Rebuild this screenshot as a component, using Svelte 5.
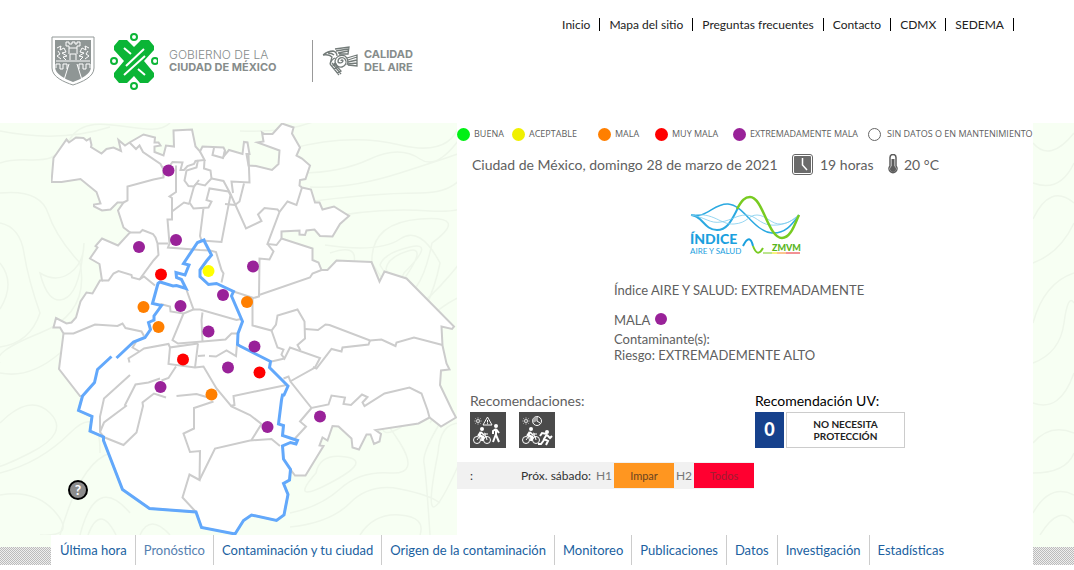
<script lang="ts">
	const topLinks = ["Inicio", "Mapa del sitio", "Preguntas frecuentes", "Contacto", "CDMX", "SEDEMA"];

	const sections = [
		"Última hora",
		"Pronóstico",
		"Contaminación y tu ciudad",
		"Origen de la contaminación",
		"Monitoreo",
		"Publicaciones",
		"Datos",
		"Investigación",
		"Estadísticas",
	];

	const legend = [
		{ label: "BUENA", level: "buena" },
		{ label: "ACEPTABLE", level: "aceptable" },
		{ label: "MALA", level: "mala" },
		{ label: "MUY MALA", level: "muy-mala" },
		{ label: "EXTREMADAMENTE MALA", level: "extrema" },
		{ label: "SIN DATOS O EN MANTENIMIENTO", level: "sin-datos" },
	];

	const levelColor: Record<string, string> = {
		aceptable: "#ffff00",
		mala: "#ff7f00",
		"muy-mala": "#ff0000",
		extrema: "#992299",
	};

	const stations = [
		{ x: 168.5, y: 170.5, level: "extrema" },
		{ x: 176, y: 240, level: "extrema" },
		{ x: 139, y: 247, level: "extrema" },
		{ x: 253, y: 266.5, level: "extrema" },
		{ x: 223, y: 295, level: "extrema" },
		{ x: 180.5, y: 306, level: "extrema" },
		{ x: 208.5, y: 331.5, level: "extrema" },
		{ x: 254.5, y: 346.5, level: "extrema" },
		{ x: 228, y: 367.5, level: "extrema" },
		{ x: 160.5, y: 387, level: "extrema" },
		{ x: 320, y: 416.5, level: "extrema" },
		{ x: 267.5, y: 427, level: "extrema" },
		{ x: 161, y: 274.5, level: "muy-mala" },
		{ x: 183, y: 359.5, level: "muy-mala" },
		{ x: 259.5, y: 372.5, level: "muy-mala" },
		{ x: 143.5, y: 307, level: "mala" },
		{ x: 158.5, y: 327, level: "mala" },
		{ x: 247, y: 302, level: "mala" },
		{ x: 211.5, y: 394.5, level: "mala" },
		{ x: 208.5, y: 271, level: "aceptable" },
	];

	// metropolitan area, clockwise from the west end
	const metroArea =
		"M51.5 182L53.5 158 66.5 139.5 69 142.5 76 137.5 83.5 138 86.5 140.5 90 138.5 91.5 145 91 147 101.5 153.5 106.5 149 113.5 147.5 121 151 118.5 140 125 145.5 129.5 142.5 143.5 134.5 155 137.5 154.5 142.5 158.5 142.5 160.5 145.5 154.5 146.5 154.5 152 163.5 155.5 166 145.5 174 146.5 173.5 130.5 192 129.5 195.5 146.5 200 151.5 202.5 146.5 223.5 147.5 225 150.5 224 156 229 150 242.5 154 244 142 247.5 142.5 249.5 154 246.5 154 248.5 165.5 256 166 272 170 278.5 164 279.5 150.5 257.5 142.5 263.5 141.5 262 132.5 264.5 134 272.5 134 282 123.5 293.5 127.5 292 133.5 300 147.5 296.5 155.5 302 158.5 310 165.5 305.5 179 300 180 299.5 185.5 302 187.5 311 189.5 315 202.5 319.5 202.5 322.5 209.5 334 206.5 349 216 340 224 332.5 236.5 320 236 314.5 229.5 306.5 230.5 305 235 299.5 234.5 299.5 230.5 281.5 231.5 281.5 238.5 312.5 248.5 312.5 260 318.5 262.5 321.5 270 327.5 270 336.5 260.5 371.5 262 379.5 281.5 384.5 271.5 406.5 278.5 454 326.5 452 329 441.5 326.5 442.5 345.5 446.5 363.5 449.5 369.5 441 370.5 440 385 452 410 456 417.5 441 426.5 429.5 417.5 418.5 423.5 375.5 430 381 434 379.5 441.5 374 444 370.5 434.5 366.5 434.5 359 449.5 352.5 447.5 351.5 438.5 338.5 426.5 332.5 426 327.5 440.5 322.5 437.5 319.5 445.5 323.5 446 305.5 475.5 295 475.5 290.5 469.5 289.5 480 283.5 483.5 288 494.5 284 515 276.5 520.5 251.5 515 243.5 520.5 235 534 201.5 527.5 196 512 149.5 508.5 122.5 489.5 103.5 440.5 103.5 437 90 431 92 416.5 78.5 410.5 82.5 396 80 396 59 369 63.5 333.5 60 327.5 53.5 327.5 56 318 66.5 323.5 71.5 322.5 76 317.5 80.5 301.5 86.5 292.5 92.5 293.5 100 280.5 102 280.5 99.5 264 90 258.5 97.5 247.5 95.5 246 102 238.5 118 245.5 130 232.5 123.5 227.5 118 210.5 123.5 202.5 117.5 202.5 110.5 209.5 102 210.5 94 206.5 94 204.5 100.5 203.5 96.5 192 80.5 179 61.5 182Z";

	// limits between municipalities
	const limits = [
		"M129.5 142.5L136 149 139.5 145.5 143 152 160.5 164 163.5 169.5 163.5 177.5 153.5 179.5 127.5 186.5 127.5 200.5 123.5 202.5",
		"M176 165.5L176 192 169.5 196.5 172 198 172 219.5 167.5 219.5 169.5 243.5 168 247.5 200 250 210 250.5 216 252 221.5 270 223.5 273.5 221.5 282.5",
		"M166 171L172.5 162 182.5 162.5 180.5 170 184 170 187.5 166 194 164 195.5 161 204.5 160 200 151.5",
		"M198 160L196.5 167.5 186.5 170.5 184.5 180.5 188.5 186 194 186.5 196.5 183.5 205 185.5 211.5 178.5 210.5 170.5 204 168.5 204.5 160",
		"M194 186.5L189.5 202.5 193.5 208.5 208.5 207.5 211.5 201.5 206.5 200 209.5 188.5 228.5 191.5 230.5 195 221.5 242 201.5 240.5 200 236 203.5 208",
		"M194 186.5L199 180M172 211.5L184 202.5 189.5 204",
		"M214 148L212.5 155 223 158 225 150.5",
		"M211.5 178.5L223.5 181 230.5 194 246 228.5 261.5 221 258 214.5 264.5 208 277.5 209.5 279.5 212",
		"M233 193L231.5 181.5 249.5 182.5 248.5 155M244 183.5L239.5 201.5 235 205 225 204",
		"M302 187.5L296.5 205 287.5 201.5 279.5 212 267.5 244 276.5 245 281.5 238.5",
		"M267.5 244L273.5 251.5 269.5 259.5 259.5 258.5 259 296.5",
		"M233.5 291.5L253.5 298 259 296.5 259 295 310 277.5 312.5 273.5 321.5 270",
		"M252.5 298L252.5 325.5 271.5 330.5 276 324.5 277.5 315.5 297.5 309.5 304.5 321.5 305 338.5 297.5 345 300.5 350.5",
		"M271.5 330.5L277.5 347.5 283.5 349.5 281.5 354.5 284.5 358.5 290 347.5 320 358 315 367.5 290 381.5M284.5 358.5L271.5 361.5",
		"M305 329L318 330 325.5 324.5 329.5 325 370 340.5 381.5 339.5 395.5 346 396.5 342.5 414 337.5 442.5 345",
		"M370 340.5L368.5 344.5 342.5 347.5 341.5 351.5 331.5 349 316.5 368.5 313 367",
		"M283.5 378.5L288.5 376.5 290.5 381.5 311.5 408 328.5 404.5 331.5 395.5 345 397.5 343.5 404 351 405 362 394.5 367.5 397 362.5 402.5 364.5 406 384.5 393.5 409.5 387.5 421.5 393.5 427.5 410 429.5 417.5",
		"M311.5 408L300 421.5 306 426.5 295 438.5",
		"M286.5 385L233.5 396 234.5 405 230.5 406",
		"M198 343.5L170 347.5 168.5 364 195 367.5 203.5 366.5 216.5 388.5 231.5 406.5 250 415 261.5 424 251.5 440",
		"M195 367.5L198 343.5M170 347.5L168.5 344 144 348.5 139.5 351.5 128.5 358.5 129.5 362.5M139.5 351.5L132.5 347.5 136 342",
		"M63.5 333.5L73.5 333.5 95 324.5 117.5 326 122.5 323.5 125.5 328 141.5 331.5 144 336",
		"M186 288.5L193.5 309.5 183.5 313.5 172.5 340 178 343.5 202.5 341.5 225.5 339.5 231.5 333.5 238 333.5",
		"M160.5 304L170 306.5 170.5 311.5 183.5 313.5M193.5 309.5L200 309.5 236.5 320 241 319M202.5 312.5L201.5 320 202.5 341.5",
		"M198 356L205 355.5M209 356L216 356.5 226.5 350.5 236 356 237 344",
		"M130 375L104 398.5 101.5 410 100 416.5 100 432 104 437",
		"M176 366.5L168.5 378 161.5 380.5M160 378.5L148.5 382.5 135.5 384.5 125 405 126 406 104 422.5 100 432",
		"M166 397.5L154 393.5 142.5 402.5 143 406 136.5 432.5 123.5 445 103.5 437",
		"M176.5 396L196.5 394 211.5 398.5",
		"M213.5 401.5L194 408 194 428.5 183.5 433.5 190 452 200 451 199.5 480 189.5 474.5 182.5 497.5 195.5 511.5",
		"M199.5 480L215 448.5 250 440.5 271.5 439 280 446",
		"M102 280.5L108.5 280.5 113.5 273.5 118.5 271 131.5 275 132 277.5 139.5 279.5 144 276.5 155 285.5",
		"M139.5 279.5L153.5 260.5 158.5 255 157.5 243.5 155.5 237.5 153 234 142.5 230 140 232.5 130 232.5M157.5 243.5L168 243.5",
	];

	// boundary of Mexico City, open on the south-west side
	const cityLimit =
		"M116.5 358L133.5 342 145 337.5 150.5 329.5 148.5 322.5 154 320 154 316 161.5 305.5 152.5 303.5 158 283.5 160 282 173 286 176.5 285.5 186 288.5 181.5 279.5 176.5 277.5 176 272.5 185 275 189 265 183.5 263.5 197.5 242.5 204 240 205 242.5 211.5 255 206.5 261 200 270 200 276.5 208.5 284.5 216.5 283.5 233.5 291.5 231.5 296 242.5 321.5 238 333.5 237.5 344.5 240 346 270.5 361.5 269.5 367.5 288 386 284 395 282.5 395 281.5 400 278.5 424 283.5 425.5 282.5 435.5 297.5 440.5 296 444 290.5 442.5 282.5 446 283.5 459 290.5 469.5 289.5 480 283.5 483.5 288 494.5 284 515 276.5 520.5 251.5 515 243.5 520.5 235 534 201.5 527.5 196 512 149.5 508.5 122.5 489.5 103.5 440.5 103.5 437 90 431 92 416.5 78.5 410.5 82.5 396 94.5 382.5 97.5 369.5 111.5 356.5";

	const contours = [
		"M0 8Q60 20 110 4M0 40C30 30 50 50 70 16S150 20 170 0M0 70Q40 66 48 90T80 140Q90 190 40 210T0 240",
		"M0 100Q20 104 24 130T40 190Q30 220 0 224M0 140Q16 160 0 186M40 150Q56 160 70 150T84 120Q80 170 64 176T40 150Z",
		"M0 300Q30 270 50 290T30 330 0 340M0 350Q40 340 70 310T100 330M0 372Q36 366 56 390T40 412M0 250Q30 256 60 230T90 200",
		"M88 412Q100 380 116 412M80 412Q96 350 130 390M60 412Q80 340 110 330M140 412Q150 390 170 412",
		"M240 8Q290 10 320 -4M290 26Q350 10 400 22T460 0M300 50Q340 50 370 36T420 36 470 0M310 64Q350 66 400 50T460 30 500 0",
		"M300 80Q370 70 420 70T470 26M312 98Q370 84 430 88T480 50M325 122Q380 130 400 116T440 140Q430 190 400 220",
		"M372 140Q370 100 420 96T432 120Q420 180 394 174ZM380 142Q384 130 410 124T404 150Q396 170 380 142ZM386 146Q388 134 408 128T404 156Q396 168 386 146Z",
		"M300 148Q350 160 354 140T330 130M310 160Q330 180 372 178M420 206Q440 180 470 170M390 200Q420 190 460 140",
		"M316 350Q320 330 346 334T330 360 316 350ZM290 390Q320 384 340 366T390 350 400 320 382 304 420 290 430 300",
		"M290 404Q330 400 350 380T400 366 440 380M360 412Q374 390 400 392T420 412M430 412Q426 350 424 340T440 300M438 330Q440 300 460 300T450 360 438 330Z",
		"M1033 20Q1050 40 1074 10M1033 60Q1060 70 1074 40M1033 96Q1050 60 1074 80M1033 140Q1060 130 1074 100M1033 200Q1044 160 1074 150M1033 240Q1060 230 1064 200T1074 180",
		"M1033 280Q1060 290 1074 250M1033 320Q1050 300 1074 310M1033 350Q1066 350 1074 330M1033 390Q1050 360 1074 372M1040 412Q1060 380 1074 400",
	];
</script>

<header class="header">
	<div class="brand">
		<svg class="brand__arms" viewBox="0 0 44 50" aria-hidden="true">
			<path d="M1 1H43V32C43 41 31 46 22 49 13 46 1 41 1 32Z" fill="#fff" stroke="#939998" stroke-width="1" />
			<path d="M4 4H40V31C40 38 30 43 22 46 14 43 4 38 4 31Z" fill="#8f9695" />
			<path d="M15 6V10H18V18M29 6V10H26V18M15 6H18V8H21V6H24V8H26V6H29M18 12H26M19 24V18H25V24M5 25H39M18 28L13 44M26 28L31 44M5 32V28H9V33H12V28H16V33M39 32V28H35V33H32V28H28V33" fill="none" stroke="#fff" stroke-width="1" />
			<path d="M6 12L10 10 9 14 13 12 15 16 11 17 16 20 12 21 15 24M38 12L34 10 35 14 31 12 29 16 33 17 28 20 32 21 29 24M7 15L9 18 6 20 10 23M37 15L35 18 38 20 34 23" fill="none" stroke="#fff" stroke-width="1" />
		</svg>
		<svg class="brand__cdmx" viewBox="0 0 48 58" aria-hidden="true">
			<g fill="none" stroke="#0bb536" stroke-width="2">
				<circle cx="24" cy="5" r="3" />
				<circle cx="4" cy="29" r="3" />
				<circle cx="45" cy="29" r="3" />
				<circle cx="24" cy="54" r="3" />
			</g>
			<path fill="#0bb536" d="M9 8H17L24 15 31 8H39L44 14V18L34 29 44 41V45L38 51H30L24 44 17 51H9L4 45V41L14 29 4 18V14Z" />
			<path d="M34 17L16 34M35 24L14 43M14 16L21 22M28 37L35 43" fill="none" stroke="#fff" stroke-width="2" />
		</svg>
		<p class="brand__gov">GOBIERNO DE LA<strong>CIUDAD DE MÉXICO</strong></p>
		<svg class="brand__bird" viewBox="0 0 36 30" aria-hidden="true">
			<g fill="none" stroke="#737b79" stroke-width="1.300">
				<path d="M1 9Q6 5 11 5 15 6 15 10M1 9Q7 8 10 11L8 18Q10 13 13 12M6 7Q10 7 12 9" />
				<path d="M13 3L27 1 26 8 17 8M14 5L26 3M16 7L26 5" />
				<path d="M25 12L35 9V20L26 19M26 14L35 11M26 16L35 14M26 18L35 17" />
				<path d="M10 17L19 28M8 18L17 29M12 17L19 25 15 27M10 20L15 18M12 23L16 20" />
				<path d="M19 15a1 1 0 0 1 2 0 3 3 0 0 1-5 1 4 4 0 0 1 7-3 5 5 0 0 1-3 8 6 6 0 0 1-7-6 7 7 0 0 1 10-5 7 7 0 0 1 2 9" />
			</g>
		</svg>
		<p class="brand__air">CALIDAD<br />DEL AIRE</p>
	</div>
	<nav class="top-links" aria-label="Enlaces">
		{#each topLinks as link}
			<a href="#{link}">{link}</a>
		{/each}
	</nav>
</header>

<main class="stage">
	<svg class="stage__contours" viewBox="0 0 1074 412" preserveAspectRatio="xMidYMin slice" aria-hidden="true">
		{#each contours as d}
			<path {d} />
		{/each}
	</svg>

	<div class="map">
		<svg viewBox="51 123 406 412" role="img" aria-label="Mapa de estaciones">
			<path class="map__area" d={metroArea} />
			{#each limits as d}
				<path class="map__limit" {d} />
			{/each}
			<path class="map__city" d={cityLimit} />
			{#each stations as station}
				<circle cx={station.x} cy={station.y} r="6" fill={levelColor[station.level]} />
			{/each}
		</svg>
		<button class="map__help" type="button" aria-label="Ayuda">?</button>
	</div>

	<section class="panel">
		<ul class="legend">
			{#each legend as item}
				<li><span class="dot dot--{item.level}"></span>{item.label}</li>
			{/each}
		</ul>

		<div class="now">
			<span class="now__date">Ciudad de México, domingo 28 de marzo de 2021</span>
			<svg class="now__clock" viewBox="0 0 21 21" aria-hidden="true">
				<rect x="0.5" y="0.5" width="20" height="20" rx="2.5" fill="#fff" stroke="#666" />
				<rect x="2" y="2" width="17" height="17" rx="1" fill="#6b6b6b" />
				<path d="M10.500 4V11L15 16" fill="none" stroke="#fff" stroke-width="1.500" />
			</svg>
			<span class="now__hour">19 horas</span>
			<svg class="now__thermo" viewBox="0 0 10 20" aria-hidden="true">
				<path d="M2 3.500a3 3 0 0 1 6 0V12a4 4 0 1 1-6 0Z" fill="#fff" stroke="#5c5c5c" stroke-width="1.500" />
				<path d="M5 5V15" stroke="#5c5c5c" stroke-width="3" />
				<circle cx="5" cy="15" r="3" fill="#5c5c5c" />
			</svg>
			<span>20 °C</span>
		</div>

		<svg class="index-logo" viewBox="-1 0 112 60" role="img" aria-label="Índice Aire y Salud ZMVM">
			<g fill="none" stroke="#2ba9e1">
				<path d="M1 20C12 20 14 35 27 35 38 35 42 24 48 13" stroke-width="2" />
				<path d="M1 20C16 24 24 8 38 9 54 10 63 36 82 38 96 39 103 28 109 20" stroke-width="1.500" />
				<path d="M1 20C25 17 30 30 44 29S58 20 67 20 82 30 91 29 103 24 109 20" stroke="#7ccbee" stroke-width="0.800" />
				<path d="M1 20C15 22 20 29 31 27S47 20 56 20 70 29 80 30 101 28 109 20" stroke="#7ccbee" stroke-width="0.800" />
			</g>
			<path d="M47 14C52 5 55 2 60 2 73 2 78 43 92 43 101 43 105 28 109 20" fill="none" stroke="#78cb21" stroke-width="2.500" />
			<text class="index-logo__name" x="0" y="49">ÍNDICE</text>
			<text class="index-logo__sub" x="0" y="59">AIRE Y SALUD</text>
			<path d="M53 51C58 41 61 43 63 51" fill="none" stroke="#1ba0de" stroke-width="2" />
			<path d="M63 51C66 59 69 60 73 53" fill="none" stroke="#78cb21" stroke-width="2" />
			<text class="index-logo__zone" x="82" y="56">ZMVM</text>
			<path d="M73 58H82" stroke="#78cb21" />
			<path d="M82 58H87" stroke="#f5e600" />
			<path d="M87 58H96" stroke="#f68b1f" />
			<path d="M96 58H110" stroke="#e5232b" />
		</svg>

		<div class="index">
			<p class="index__level">Índice AIRE Y SALUD: EXTREMADAMENTE MALA <span class="dot dot--extrema"></span></p>
			<p>Contaminante(s):</p>
			<p>Riesgo: EXTREMADEMENTE ALTO</p>
		</div>

		<div class="advice">
			<div class="advice__block">
				<h2>Recomendaciones:</h2>
				<div class="advice__icons">
					<svg viewBox="0 0 36 36" role="img" aria-label="Evita actividades al aire libre">
						<rect width="36" height="36" fill="#4a4a4a" />
						<g fill="none" stroke="#fff">
							<circle cx="8" cy="9" r="1.500" stroke-width="0.800" />
							<path d="M8 5.500V6.500M8 11.500V12.500M4.500 9H5.500M10.500 9H11.500M5.500 6.500L6.300 7.300M10.500 6.500L9.700 7.300M5.500 11.500L6.300 10.700M10.500 11.500L9.700 10.700" stroke-width="0.800" />
							<path d="M17.500 5L22 13H13Z M17.500 8V10.500M17.500 11.200V12.200" />
							<circle cx="7" cy="28" r="3.500" />
							<circle cx="17" cy="28" r="3.500" />
							<path d="M7 28L10 24 13 28 16 24 17 28M14 21L16 22H18" />
							<path d="M11 20L9 23 13 25 12 29" stroke-width="2.500" />
							<path d="M11 20L14 23H16" stroke-width="1.500" />
							<path d="M26 17V23L29 30M26 22L23 30M26 17L23 19V22M26 17L29 21" stroke-width="2" />
						</g>
						<circle cx="12" cy="17" r="2" fill="#fff" />
						<circle cx="26" cy="14" r="2" fill="#fff" />
					</svg>
					<svg viewBox="0 0 36 36" role="img" aria-label="Limita el ejercicio por horario">
						<rect width="36" height="36" fill="#4a4a4a" />
						<g fill="none" stroke="#fff">
							<circle cx="7" cy="9" r="1.500" stroke-width="0.800" />
							<path d="M7 5.500V6.500M7 11.500V12.500M3.500 9H4.500M9.500 9H10.500M4.500 6.500L5.300 7.300M9.500 6.500L8.700 7.300M4.500 11.500L5.300 10.700M9.500 11.500L8.700 10.700" stroke-width="0.800" />
							<circle cx="18" cy="9" r="4.500" />
							<path d="M18 5V9L21 11" />
							<circle cx="7" cy="28" r="3.500" />
							<circle cx="17" cy="28" r="3.500" />
							<path d="M7 28L10 24 13 28 16 24 17 28M14 21L16 22H18" />
							<path d="M11 20L9 23 13 25 12 29" stroke-width="2.500" />
							<path d="M11 20L14 23H16" stroke-width="1.500" />
							<path d="M28 22L25 27 29 29 27 33M25 28L22 32H19M28 22L23 21 21 24M28 23L31 26 33 24" stroke-width="2" />
						</g>
						<path d="M18 9V4.500A4.500 4.500 0 0 0 14 11Z" fill="#aaa" />
						<circle cx="12" cy="17" r="2" fill="#fff" />
						<circle cx="28" cy="20" r="2" fill="#fff" />
					</svg>
				</div>
			</div>
			<div class="advice__block advice__block--uv">
				<h2>Recomendación UV:</h2>
				<div class="uv">
					<strong class="uv__value">0</strong>
					<span class="uv__text">NO NECESITA PROTECCIÓN</span>
				</div>
			</div>
		</div>

		<div class="driving">
			<span class="driving__today">:</span>
			<span class="driving__next">Próx. sábado:</span>
			<span class="driving__tag">H1</span>
			<span class="driving__cell driving__cell--h1">Impar</span>
			<span class="driving__tag">H2</span>
			<span class="driving__cell driving__cell--h2">Todos</span>
		</div>
	</section>
</main>

<div class="nav-band">
	<nav class="sections" aria-label="Secciones">
		{#each sections as section, i}
			<a href="#{section}" class:is-active={i === 1}>{section}</a>
		{/each}
	</nav>
</div>

<style>
	:global(body) {
		margin: 0;
		background: #fff;
		color: #606060;
		font-family: Lato, "Open Sans", sans-serif;
		font-size: 14px;
	}

	p,
	h2,
	ul {
		margin: 0;
		padding: 0;
		list-style: none;
	}

	a {
		text-decoration: none;
		white-space: nowrap;
	}

	.header {
		display: flex;
		justify-content: space-between;
		align-items: flex-start;
		min-height: 123px;
		padding: 0 60px 0 51px;
		box-sizing: border-box;
	}

	.brand {
		display: flex;
		align-items: center;
		padding-top: 32px;
		color: #868c8b;
		font-family: Inter, sans-serif;
		white-space: nowrap;
	}

	.brand__arms {
		width: 44px;
		height: 50px;
		margin-right: 15px;
	}

	.brand__cdmx {
		width: 48px;
		height: 58px;
		margin-right: 11px;
	}

	.brand__gov {
		width: 112px;
		padding: 8px 31px 8px 0;
		margin-right: 9px;
		border-right: 1px solid #999;
		font-size: 12px;
		font-weight: 300;
		line-height: 13px;
	}

	.brand__gov strong {
		display: block;
		font-size: 11px;
		font-weight: 700;
	}

	.brand__bird {
		width: 36px;
		height: 30px;
		margin-right: 6px;
	}

	.brand__air {
		font-size: 11px;
		font-weight: 700;
		line-height: 13px;
	}

	.top-links {
		display: flex;
		gap: 9px;
		padding-top: 18px;
	}

	.top-links a {
		padding: 1px 9px 0 0;
		border-right: 1px solid #000;
		color: #222;
		font-size: 12px;
		line-height: 12px;
	}

	.stage {
		position: relative;
		display: flex;
		padding: 0 41px 0 51px;
		background: #f7fff3;
		overflow: hidden;
	}

	.stage__contours {
		position: absolute;
		inset: 0;
		width: 100%;
		height: 100%;
		fill: none;
		stroke: #eef6ea;
		stroke-width: 1.5;
	}

	.map {
		position: relative;
		flex: 0 1 406px;
	}

	.map svg {
		display: block;
		width: 100%;
	}

	.map__area {
		fill: #fff;
		stroke: #ccc;
		stroke-width: 2;
	}

	.map__limit {
		fill: none;
		stroke: #ccc;
		stroke-width: 2;
	}

	.map__city {
		fill: none;
		stroke: #62a8fb;
		stroke-width: 3;
	}

	.map__help {
		position: absolute;
		left: 17px;
		bottom: 35px;
		width: 20px;
		height: 20px;
		padding: 0;
		border: 2px solid #000;
		border-radius: 50%;
		background: #8c8c8c;
		color: #fff;
		font: 700 14px/16px Lato, sans-serif;
	}

	.panel {
		position: relative;
		flex: 1;
		min-width: 0;
		background: #fff;
	}

	.legend {
		display: grid;
		grid-template-columns: 55px 86px 57px 78px 135px auto;
		padding-top: 4px;
		font-family: "Open Sans", sans-serif;
		font-size: 9px;
		line-height: 14px;
		white-space: nowrap;
	}

	.legend li {
		display: flex;
		align-items: center;
		gap: 4px;
	}

	.dot {
		display: inline-block;
		flex: none;
		width: 13px;
		height: 13px;
		border-radius: 50%;
		box-sizing: border-box;
	}

	.dot--buena { background: #00f015; }
	.dot--aceptable { background: #f0f000; }
	.dot--mala { background: #ff7f00; }
	.dot--muy-mala { background: #ff0000; }
	.dot--extrema { background: #992299; }
	.dot--sin-datos { border: 1px solid #666; margin-right: 2px; }

	.now {
		display: flex;
		align-items: center;
		height: 22px;
		margin: 12px 0 20px;
		padding-left: 15px;
		font-size: 14px;
		white-space: nowrap;
	}

	.now__date {
		width: 320px;
	}

	.now__clock {
		width: 21px;
		height: 21px;
		margin-right: 7px;
	}

	.now__hour {
		width: 68px;
	}

	.now__thermo {
		width: 10px;
		height: 20px;
		margin-right: 6px;
	}

	.index-logo {
		display: block;
		width: 112px;
		height: 60px;
		margin: 0 auto;
	}

	.index-logo__name {
		fill: #1ba0de;
		font: 900 14px Lato, sans-serif;
	}

	.index-logo__sub {
		fill: #1ba0de;
		font: 8px Lato, sans-serif;
	}

	.index-logo__zone {
		fill: #58b51c;
		font: 900 9px Lato, sans-serif;
	}

	.index {
		width: 270px;
		margin: 20px 0 0 157px;
		font-size: 13px;
		line-height: 16px;
	}

	.index__level {
		margin-bottom: -4px;
		line-height: 30px;
	}

	.index .dot {
		width: 12px;
		height: 12px;
		margin-left: 2px;
	}

	.advice {
		display: flex;
		margin-top: 29px;
		padding-left: 13px;
	}

	.advice__block {
		flex: 0 0 285px;
	}

	.advice__block--uv {
		flex: 1;
	}

	.advice h2 {
		font-size: 14px;
		font-weight: 400;
		line-height: 18px;
		padding-bottom: 2px;
	}

	.advice__block--uv h2 {
		color: #000;
	}

	.advice__icons {
		display: flex;
		gap: 13px;
	}

	.advice__icons svg {
		width: 36px;
		height: 36px;
	}

	.uv {
		display: flex;
		gap: 2px;
		height: 36px;
	}

	.uv__value {
		width: 29px;
		background: #16418c;
		color: #fff;
		font-size: 18px;
		font-weight: 900;
		line-height: 34px;
		text-align: center;
	}

	.uv__text {
		width: 119px;
		padding: 5px 20px;
		border: 1px solid #ccc;
		box-sizing: border-box;
		color: #222;
		font-size: 10px;
		font-weight: 700;
		line-height: 12px;
		text-align: center;
	}

	.driving {
		display: flex;
		align-items: center;
		width: 297px;
		height: 27px;
		margin-top: 14px;
		background: #f1f1f1;
		color: #333;
		font-size: 12px;
		white-space: nowrap;
	}

	.driving__today {
		width: 51px;
		padding-left: 13px;
	}

	.driving__next {
		width: 73px;
	}

	.driving__tag {
		flex: 1;
		color: #777;
		text-align: center;
	}

	.driving__cell {
		width: 60px;
		font-size: 11px;
		line-height: 25px;
		text-align: center;
	}

	.driving__cell--h1 {
		background: #ff9620;
		color: #6b4420;
	}

	.driving__cell--h2 {
		background: #ff0030;
		color: #a01c30;
	}

	.nav-band {
		padding: 0 41px 0 51px;
		background:
			linear-gradient(#f7fff3, #f7fff3) 0 0 / 100% 12px no-repeat,
			repeating-conic-gradient(#bbb 0 25%, #eee 0 50%) 0 0 / 2px 2px;
	}

	.sections {
		display: flex;
		padding-left: 1px;
		background: #fff;
	}

	.sections a {
		padding: 0 8px;
		border-right: 1px solid #ccc;
		color: #205f9f;
		font-size: 13px;
		line-height: 30px;
	}

	.sections a:last-child {
		border-right: 0;
	}

	.sections .is-active {
		color: #5580b0;
	}
</style>
